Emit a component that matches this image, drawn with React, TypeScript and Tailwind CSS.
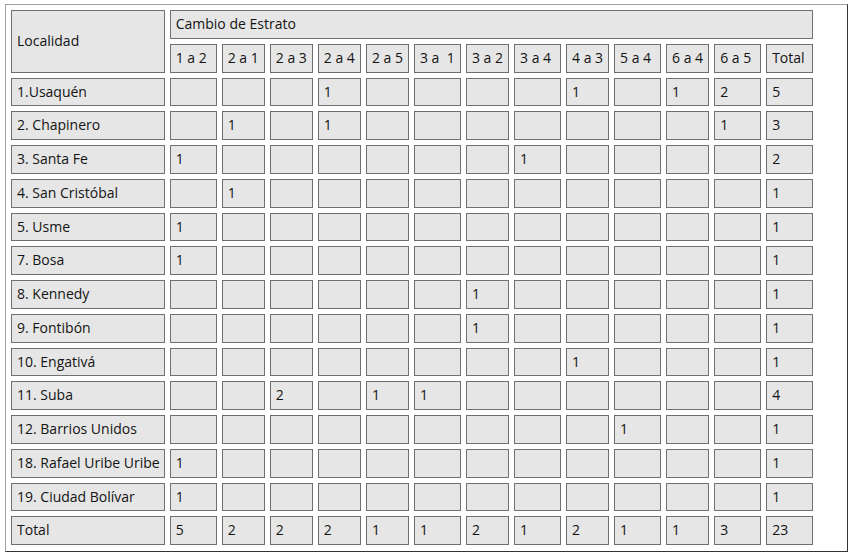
import React from "react";

const heads: { label: string; w: string }[] = [
  { label: "1 a 2", w: "w-[47px]" },
  { label: "2 a 1", w: "w-[43px]" },
  { label: "2 a 3", w: "w-[43px]" },
  { label: "2 a 4", w: "w-[43px]" },
  { label: "2 a 5", w: "w-[43px]" },
  { label: "3 a\u00a0\u00a01", w: "w-[47px]" },
  { label: "3 a 2", w: "w-[43px]" },
  { label: "3 a 4", w: "w-[47px]" },
  { label: "4 a 3", w: "w-[43px]" },
  { label: "5 a 4", w: "w-[47px]" },
  { label: "6 a 4", w: "w-[43px]" },
  { label: "6 a 5", w: "w-[47px]" },
  { label: "Total", w: "w-[47px]" },
];

const rows: [string, (string | number)[]][] = [
  ["1.Usaquén", ["", "", "", 1, "", "", "", "", 1, "", 1, 2, 5]],
  ["2. Chapinero", ["", 1, "", 1, "", "", "", "", "", "", "", 1, 3]],
  ["3. Santa Fe", [1, "", "", "", "", "", "", 1, "", "", "", "", 2]],
  ["4. San Cristóbal", ["", 1, "", "", "", "", "", "", "", "", "", "", 1]],
  ["5. Usme", [1, "", "", "", "", "", "", "", "", "", "", "", 1]],
  ["7. Bosa", [1, "", "", "", "", "", "", "", "", "", "", "", 1]],
  ["8. Kennedy", ["", "", "", "", "", "", 1, "", "", "", "", "", 1]],
  ["9. Fontibón", ["", "", "", "", "", "", 1, "", "", "", "", "", 1]],
  ["10. Engativá", ["", "", "", "", "", "", "", "", 1, "", "", "", 1]],
  ["11. Suba", ["", "", 2, "", 1, 1, "", "", "", "", "", "", 4]],
  ["12. Barrios Unidos", ["", "", "", "", "", "", "", "", "", 1, "", "", 1]],
  ["18. Rafael Uribe Uribe", [1, "", "", "", "", "", "", "", "", "", "", "", 1]],
  ["19. Ciudad Bolívar", [1, "", "", "", "", "", "", "", "", "", "", "", 1]],
  ["Total", [5, 2, 2, 2, 1, 1, 2, 1, 2, 1, 1, 3, 23]],
];

const cell =
  "border border-[#707070] bg-[#e6e6e6] px-[5px] py-[4px] leading-[18.75px] text-left font-normal align-middle whitespace-nowrap";

const first =
  "border border-[#707070] bg-[#e6e6e6] pl-[5px] pr-[4px] py-[4px] leading-[18.75px] text-left font-normal align-middle whitespace-nowrap";

export default function App() {
  return (
    <div className="min-h-[557px] w-[854px] bg-white pl-[5px] pt-[4px] text-[14px] text-[#141414] [font-family:'Open_Sans',sans-serif]">
      <div className="inline-block border border-t-[#a0a0a0] border-l-[#a0a0a0] border-r-[#333333] border-b-[#333333] pr-[29px] pb-[1px]">
        <table className="border-separate border-spacing-[5px]">
          <thead>
            <tr>
              <th rowSpan={2} className={`${first} w-[153px]`}>
                Localidad
              </th>
              <th colSpan={13} className={cell}>
                Cambio de Estrato
              </th>
            </tr>
            <tr>
              {heads.map((h) => (
                <th key={h.label} className={`${cell} ${h.w}`}>
                  {h.label}
                </th>
              ))}
            </tr>
          </thead>
          <tbody>
            {rows.map(([name, vals]) => (
              <tr key={name}>
                <td className={first}>{name}</td>
                {vals.map((v, i) => (
                  <td key={i} className={cell}>
                    {v}
                  </td>
                ))}
              </tr>
            ))}
          </tbody>
        </table>
      </div>
    </div>
  );
}
